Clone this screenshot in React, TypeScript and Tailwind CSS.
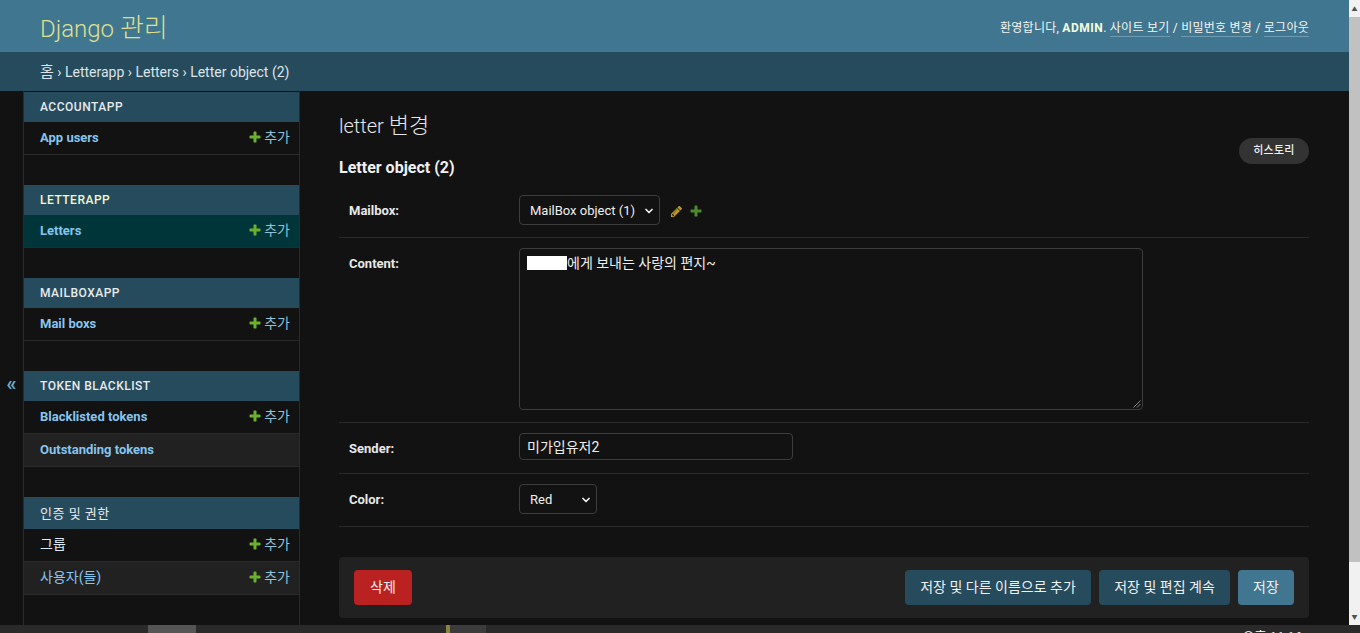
import { ChevronDown } from 'lucide-react';
import type { ReactNode } from 'react';

type Row = { name: string; korean?: boolean; add?: boolean; stripe?: boolean; current?: boolean; light?: boolean };
type Module = { title: string; korean?: boolean; active?: boolean; rows: Row[] };

const modules: Module[] = [
  { title: 'ACCOUNTAPP', rows: [{ name: 'App users', add: true }] },
  { title: 'LETTERAPP', active: true, rows: [{ name: 'Letters', add: true, current: true }] },
  { title: 'MAILBOXAPP', rows: [{ name: 'Mail boxs', add: true }] },
  {
    title: 'TOKEN BLACKLIST',
    rows: [
      { name: 'Blacklisted tokens', add: true },
      { name: 'Outstanding tokens', stripe: true },
    ],
  },
  {
    title: '인증 및 권한',
    korean: true,
    rows: [
      { name: '그룹', korean: true, add: true, light: true },
      { name: '사용자(들)', korean: true, add: true, stripe: true },
    ],
  },
];

function AddIcon({ className }: { className: string }) {
  return (
    <svg viewBox="0 0 1792 1792" width="14" height="14" className={className}>
      <path
        fill="currentColor"
        d="M1600 796v192q0 40-28 68t-68 28h-416v416q0 40-28 68t-68 28h-192q-40 0-68-28t-28-68v-416h-416q-40 0-68-28t-28-68v-192q0-40 28-68t68-28h416v-416q0-40 28-68t68-28h192q40 0 68 28t28 68v416h416q40 0 68 28t28 68z"
      />
    </svg>
  );
}

function ChangeIcon({ className }: { className: string }) {
  return (
    <svg viewBox="0 0 1792 1792" width="13" height="13" className={className}>
      <path
        fill="currentColor"
        d="M491 1536l91-91-235-235-91 91v107h128v128h107zm523-928q0-22-22-22-10 0-17 7l-542 542q-7 7-7 17 0 22 22 22 10 0 17-7l542-542q7-7 7-17zm-54-192l416 416-832 832h-416v-416zm683 96q0 53-37 90l-166 166-416-416 166-165q36-38 90-38 53 0 91 38l235 234q37 39 37 91z"
      />
    </svg>
  );
}

function AddLink() {
  return (
    <span className="flex items-center pb-[2px] text-[14px] font-normal text-[#8fc1d9]">
      <AddIcon className="mr-[2px] text-[#6cb02e]" />
      추가
    </span>
  );
}

function SidebarModule({ module }: { module: Module }) {
  return (
    <div className="mb-[30px]">
      <div
        className={`flex items-center bg-[#264b5d] px-4 tracking-[0.5px] ${
          module.korean
            ? 'h-[32px] pt-[2px] text-[13px] text-[#e8eaec]'
            : 'h-[30px] text-[12px] font-medium text-[#e8eaec]'
        } ${module.active ? 'font-bold text-[#f2f7d2]' : ''}`}
      >
        {module.title}
      </div>
      {module.rows.map((row) => (
        <div
          key={row.name}
          className={`box-content flex h-[32px] items-center justify-between border-b border-[#2a2a2a] pl-4 pr-[9px] ${
            row.korean ? 'text-[14px]' : 'text-[13px] font-bold'
          } ${row.current ? 'bg-[#00363a]' : row.stripe ? 'bg-[#212121]' : 'bg-[#121212]'}`}
        >
          <span className={`${row.korean ? 'pb-[2px]' : ''} ${row.light ? 'text-[#dceaf2]' : 'text-[#85c5ee]'}`}>
            {row.name}
          </span>
          {row.add && <AddLink />}
        </div>
      ))}
    </div>
  );
}

function Select({ label, width }: { label: string; width: string }) {
  return (
    <div
      className={`flex h-[30px] items-center justify-between rounded border border-[#3d3d3d] bg-[#121212] pl-[10px] pr-[4px] pt-[2px] text-[13px] text-[#eeeeee] ${width}`}
    >
      <span>{label}</span>
      <ChevronDown size={12} strokeWidth={3.5} className="text-[#eeeeee]" />
    </div>
  );
}

function FormRow({
  label,
  labelClass = '',
  children,
  className,
}: {
  label: string;
  labelClass?: string;
  children: ReactNode;
  className: string;
}) {
  return (
    <div className={`flex border-b border-[#2a2a2a] ${className}`}>
      <label className={`w-[180px] shrink-0 pl-[10px] text-[13px] font-bold text-[#e8e8e8] ${labelClass}`}>
        {label}
      </label>
      {children}
    </div>
  );
}

export default function App() {
  return (
    <div className="flex h-[633px] flex-col overflow-hidden bg-[#121212] font-['Roboto','Noto_Sans_CJK_KR',sans-serif]">
      <div className="flex min-h-0 flex-1">
        <div className="flex min-w-0 flex-1 flex-col">
          <header className="flex h-[52px] shrink-0 items-center justify-between bg-[#417690] px-10 pt-[4px]">
            <h1 className="text-[24px] font-light text-[#dfe08f]">
              Django <span className="text-[26px]">관리</span>
            </h1>
            <div className="text-[12px] tracking-[0.25px] text-[#f5f5f0]">
              환영합니다, <strong className="font-bold tracking-[0.5px] text-[#f5ffdc]">ADMIN</strong>.{' '}
              <a className="border-b border-[#6c9bb3] pb-px">사이트 보기</a> /{' '}
              <a className="border-b border-[#6c9bb3] pb-px">비밀번호 변경</a> /{' '}
              <a className="border-b border-[#6c9bb3] pb-px">로그아웃</a>
            </div>
          </header>
          <nav className="flex h-[39px] shrink-0 items-center whitespace-pre bg-[#264b5d] pl-10 pt-[2px] text-[14px] text-[#dde4e8]">
            <span className="text-[15px]">홈</span> › Letterapp › Letters › Letter object (2)
          </nav>
          <div className="flex min-h-0 flex-1">
            <div className="flex w-[24px] shrink-0 justify-center border-r border-[#2a2a2a] pt-[282px] text-[20px] font-bold leading-none text-[#6aaed6]">
              «
            </div>
            <aside className="w-[276px] shrink-0 overflow-hidden border-r border-[#2a2a2a] pt-px">
              {modules.map((m) => (
                <SidebarModule key={m.title} module={m} />
              ))}
            </aside>
            <main className="relative min-w-0 flex-1 pl-[39px] pr-10 pt-[21px]">
              <h1 className="mb-[16px] text-[20px] font-light leading-[28px] text-[#e6e6e6]">
                letter <span className="text-[22px]">변경</span>
              </h1>
              <button className="absolute right-10 top-[47px] h-[26px] w-[70px] rounded-[13px] bg-[#333333] text-[11px] font-medium tracking-[0.25px] text-[#f0f0f0]">
                히스토리
              </button>
              <h2 className="mb-[15px] text-[16px] font-bold leading-[24px] text-[#f0f0f0]">Letter object (2)</h2>
              <FormRow label="Mailbox:" labelClass="mt-[2px]" className="h-[43px] items-center pb-[12px]">
                <Select label="MailBox object (1)" width="w-[141px]" />
                <ChangeIcon className="ml-[10px] mt-[2px] text-[#c2991f]" />
                <AddIcon className="ml-[6px] mt-[2px] text-[#4d8a2e]" />
              </FormRow>
              <FormRow label="Content:" labelClass="mt-[6px]" className="h-[185px] items-start pt-[10px]">
                <div className="relative h-[162px] w-[624px] rounded border border-[#3d3d3d] px-[7px] pt-[7px] text-[14px] text-[#eeeeee]">
                  <div className="flex h-[14px] items-center">
                    <span className="h-[14px] w-[40px] bg-white" />
                    <span>에게 보내는 사랑의 편지~</span>
                  </div>
                  <svg viewBox="0 0 8 8" width="8" height="8" className="absolute bottom-px right-px text-[#8a8a8a]">
                    <path d="M0.5 7.5 7.5 0.5M4 7.5 7.5 4" stroke="currentColor" fill="none" />
                  </svg>
                </div>
              </FormRow>
              <FormRow label="Sender:" labelClass="mt-[4px]" className="h-[51px] items-center pb-[3px]">
                <div className="flex h-[27px] w-[274px] items-center rounded border border-[#3d3d3d] px-[7px] pt-[2px] text-[14px] text-[#eeeeee]">
                  미가입유저2
                </div>
              </FormRow>
              <FormRow label="Color:" labelClass="mt-[2px]" className="h-[53px] items-center pb-[2px]">
                <Select label="Red" width="w-[78px]" />
              </FormRow>
              <div className="mt-[30px] flex h-[61px] items-center justify-between rounded bg-[#212121] px-[15px] text-[14px] text-[#f0f0f0]">
                <button className="h-[35px] w-[58px] rounded bg-[#ba2121]">삭제</button>
                <div className="flex gap-2">
                  <button className="h-[35px] w-[186px] rounded bg-[#264b5d]">저장 및 다른 이름으로 추가</button>
                  <button className="h-[35px] w-[131px] rounded bg-[#264b5d]">저장 및 편집 계속</button>
                  <button className="h-[35px] w-[56px] rounded bg-[#417690]">저장</button>
                </div>
              </div>
            </main>
          </div>
        </div>
        <div className="flex w-[11px] shrink-0 flex-col bg-[#f1f1f1]">
          <div className="h-[17px] text-center text-[6px] leading-[17px] text-[#505050]">▲</div>
          <div className="h-[545px] bg-[#c1c1c1]" />
          <div className="mt-auto h-[17px] text-center text-[6px] leading-[17px] text-[#505050]">▼</div>
        </div>
      </div>
      <footer className="flex h-[8px] shrink-0 overflow-hidden bg-[#2a2a2a]">
        <div className="ml-[148px] h-full w-[48px] bg-[#555555]" />
        <div className="ml-[250px] h-full w-[4px] bg-[#8a8440]" />
        <div className="h-full w-[36px] bg-[#3c3c3c]" />
        <div className="ml-auto whitespace-nowrap pr-[58px] pt-[4px] text-[13px] leading-[16px] text-white">오후 11:16</div>
      </footer>
    </div>
  );
}
